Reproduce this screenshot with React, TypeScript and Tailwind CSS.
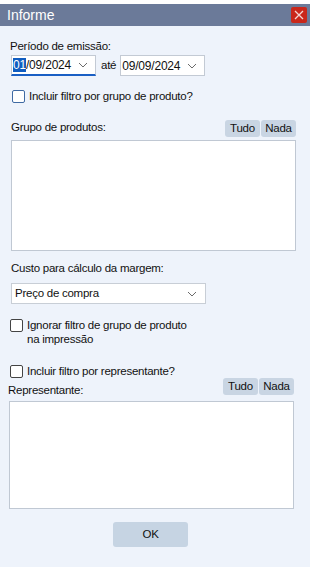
import { useState } from 'react'

function Chevron() {
  return (
    <svg width="10" height="6" viewBox="0 0 10 6" className="shrink-0">
      <path d="M1 1 L5 5 L9 1" fill="none" stroke="#6b6b6b" strokeWidth="1" />
    </svg>
  )
}

function Checkbox({ label, accent }: { label: React.ReactNode; accent?: boolean }) {
  const [checked, setChecked] = useState(false)
  return (
    <label className="flex cursor-default items-start gap-[4px]">
      <span
        onClick={() => setChecked(!checked)}
        className={`mt-[1px] h-[13px] w-[13px] shrink-0 rounded-[2px] border bg-white ${
          accent ? 'border-[#3f6aa3]' : 'border-[#444]'
        }`}
      />
      <span className="leading-[14px]">{label}</span>
    </label>
  )
}

function SmallButtons() {
  return (
    <div className="flex gap-px">
      <button className="h-[17px] w-[35px] rounded-[3px] bg-[#c9d5e3] leading-[17px] text-[#111]">
        Tudo
      </button>
      <button className="h-[17px] w-[35px] rounded-[3px] bg-[#c9d5e3] leading-[17px] text-[#111]">
        Nada
      </button>
    </div>
  )
}

function DateField({ value, focused }: { value: string; focused?: boolean }) {
  return (
    <div
      className={`flex h-[21px] w-[85px] items-center justify-between border border-[#c3cad4] bg-white pl-px pr-[7px] ${
        focused ? 'border-b-2 border-b-[#1a5fc4]' : ''
      }`}
    >
      <span className="text-[12px] leading-[16px] tracking-[-0.2px]">
        {focused ? (
          <>
            <span className="bg-[#0f5cc0] text-white">{value.slice(0, 2)}</span>
            {value.slice(2)}
          </>
        ) : (
          value
        )}
      </span>
      <Chevron />
    </div>
  )
}

export default function App() {
  return (
    <div
      className="h-[567px] w-[310px] bg-white pt-[4px] text-[11.5px] tracking-[-0.25px] text-[#111]"
      style={{ fontFamily: '"Liberation Sans", Arial, sans-serif' }}
    >
      <div className="flex h-[22px] items-center justify-between bg-[#6b7a99] pl-[7px] pr-[3px]">
        <span className="text-[14px] tracking-normal text-white">Informe</span>
        <button className="flex h-[16px] w-[16px] items-center justify-center rounded-[2px] bg-[#c9271b]">
          <svg width="10" height="10" viewBox="0 0 10 10">
            <path d="M1 1 L9 9 M9 1 L1 9" stroke="#f3d6d3" strokeWidth="1.3" />
          </svg>
        </button>
      </div>

      <div className="flex h-[541px] flex-col bg-[#eef3fb] pr-[14px]">
        <div className="pl-[10px] pt-[12px] leading-[16px]">Período de emissão:</div>
        <div className="mt-px flex items-center pl-[11px]">
          <DateField value="01/09/2024" focused />
          <span className="ml-[5px] mr-[4px]">até</span>
          <DateField value="09/09/2024" />
        </div>

        <div className="mt-[13px] pl-[12px]">
          <Checkbox label="Incluir filtro por grupo de produto?" accent />
        </div>

        <div className="mt-[16px] flex items-start justify-between pl-[11px]">
          <span className="leading-[16px]">Grupo de produtos:</span>
          <div className="mt-[1px]">
            <SmallButtons />
          </div>
        </div>
        <div className="ml-[11px] mt-[3px] h-[111px] border border-[#c0c8d3] bg-white" />

        <div className="mt-[9px] pl-[11px] leading-[16px]">Custo para cálculo da margem:</div>
        <div className="ml-[11px] mt-[7px] flex h-[21px] w-[195px] items-center justify-between border border-[#c8ced6] bg-white pl-[3px] pr-[8px]">
          <span>Preço de compra</span>
          <Chevron />
        </div>

        <div className="mt-[14px] pl-[10px]">
          <Checkbox
            label={
              <>
                Ignorar filtro de grupo de produto
                <br />
                na impressão
              </>
            }
          />
        </div>

        <div className="mt-[18px] pl-[10px]">
          <Checkbox label="Incluir filtro por representante?" />
        </div>

        <div className="flex items-start justify-between pl-[8px] pr-[2px]">
          <span className="mt-[4px] leading-[16px]">Representante:</span>
          <SmallButtons />
        </div>
        <div className="ml-[9px] mr-[2px] mt-[3px] h-[108px] border border-[#c0c8d3] bg-white" />

        <div className="mt-[13px] flex justify-center pl-[5px]">
          <button className="h-[25px] w-[75px] rounded-[3px] bg-[#c6d4e3]">OK</button>
        </div>
      </div>
    </div>
  )
}
